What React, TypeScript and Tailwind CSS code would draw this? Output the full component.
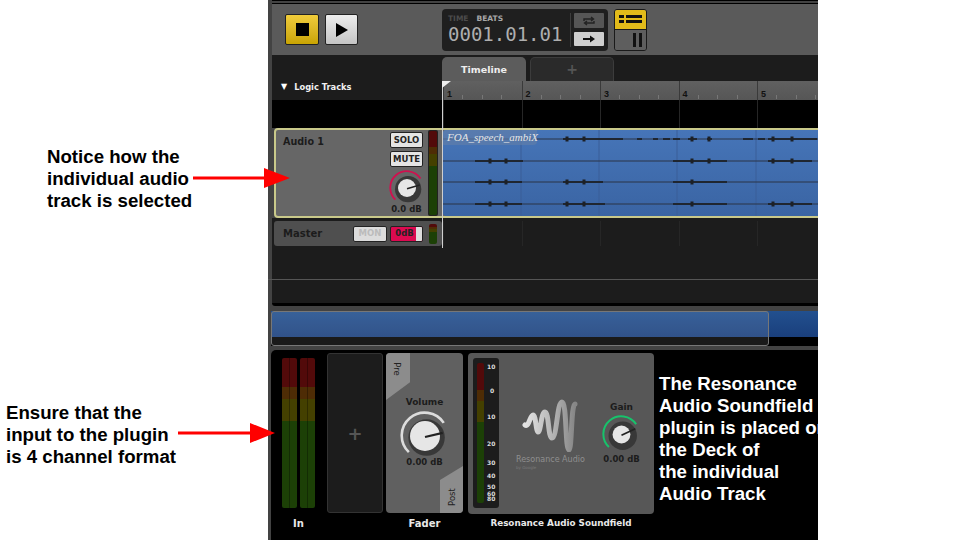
const ui = "font-['DejaVu_Sans',sans-serif]";

// x ranges per waveform row, read off the clip
const rowY = [139, 161, 182, 204];
const thick: [number, number, number][] = [
  [0, 563, 588], [0, 588, 613], [0, 613, 623], [0, 637, 642], [0, 653, 658], [0, 663, 670], [0, 673, 680],
  [0, 688, 697], [0, 707, 712], [0, 743, 753], [0, 758, 765], [0, 768, 817],
  [1, 475, 523], [1, 673, 727], [1, 768, 812],
  [2, 475, 522], [2, 563, 603], [2, 673, 727],
  [3, 475, 522], [3, 563, 605], [3, 673, 727], [3, 768, 812],
];
const blips: [number, number][] = [
  [0, 567], [0, 584], [0, 692], [0, 709], [0, 773], [0, 792],
  [1, 490], [1, 506], [1, 692], [1, 709], [1, 773], [1, 792],
  [2, 490], [2, 506], [2, 567], [2, 584], [2, 692],
  [3, 490], [3, 506], [3, 567], [3, 584], [3, 692], [3, 773], [3, 792],
];

function Waveform() {
  return (
    <svg className="absolute top-0 left-0" width="381" height="86" viewBox="443 130 381 86">
      {[521, 599, 677, 756].map((x) => (
        <line key={x} x1={x} x2={x} y1="130" y2="216" stroke="#3a5f98" strokeWidth="1" />
      ))}
      {rowY.map((y) => (
        <line key={y} x1="443" x2="824" y1={y} y2={y} stroke="#2a3547" strokeWidth="1" />
      ))}
      {thick.map(([r, a, b], i) => (
        <line key={i} x1={a} x2={b} y1={rowY[r]} y2={rowY[r]} stroke="#1f2630" strokeWidth="1.8" />
      ))}
      {blips.map(([r, x], i) => (
        <rect key={i} x={x - 1.5} y={rowY[r] - 2.5} width="3" height="5" fill="#1c2026" />
      ))}
    </svg>
  );
}

function Knob({ size, arc, tip, r }: { size: number; arc: string; tip: number; r: number }) {
  return (
    <svg width={size} height={size} viewBox="0 0 48 48">
      <path d="M8.5 39.5 A22 22 0 1 1 42 11.4" fill="none" stroke={arc} strokeWidth="2.5" />
      <circle cx="25.5" cy="25.5" r="17.5" fill="#383838" />
      <circle cx="24" cy="24" r={r} fill="#e6e6e6" />
      <path d={`M24 25 L41 ${tip}`} stroke="#222" strokeWidth="2" />
    </svg>
  );
}

function Meter({ w, h, split }: { w: string; h: string; split?: boolean }) {
  return (
    <div className={`relative flex flex-col overflow-hidden rounded-[2px] ${w} ${h}`}>
      <div className="h-[19%] bg-[#520a0a]" />
      <div className="h-[8%] bg-[#4e2c05]" />
      <div className="h-[15%] bg-[#444000]" />
      <div className="flex-1 bg-[#1c4006]" />
      {split && <i className="absolute top-0 left-[7px] h-full w-px bg-black/30" />}
    </div>
  );
}

function Ruler() {
  return (
    <div className="flex h-[19px] bg-gradient-to-b from-[#606060] to-[#565656]">
      {[1, 2, 3, 4, 5].map((n) => (
        <div key={n} className="grid h-full w-[78.5px] shrink-0 grid-cols-4 border-l border-[#3a3a3a]">
          <div className="flex items-end pb-[1px] pl-[3px]">
            <span className="font-['Liberation_Sans',sans-serif] text-[9px] leading-[10px] font-bold text-[#111]">{n}</span>
            <i className="ml-auto h-[4px] w-px bg-[#777]" />
          </div>
          <div className="flex items-end pb-[1px]"><i className="ml-auto h-[4px] w-px bg-[#777]" /></div>
          <div className="flex items-end pb-[1px]"><i className="ml-auto h-[4px] w-px bg-[#777]" /></div>
          <div />
        </div>
      ))}
    </div>
  );
}

function GridLines() {
  return (
    <div className="flex h-full">
      {[1, 2, 3, 4, 5].map((n) => (
        <div key={n} className="h-full w-[78.5px] shrink-0 border-l border-[#262626]" />
      ))}
    </div>
  );
}

export default function App() {
  return (
    <div className="relative flex h-[540px] w-[960px] overflow-hidden bg-white font-['Liberation_Sans',sans-serif]">
      <div className="flex h-full w-[268px] shrink-0 flex-col text-[18.67px] leading-[22px] font-bold text-black">
        <div className="mt-[146px] pl-[47px] whitespace-nowrap">Notice how the<br />individual audio<br />track is selected</div>
        <div className="mt-[190px] pl-[6px] whitespace-nowrap">Ensure that the<br />input to the plugin<br />is 4 channel format</div>
      </div>

      <div className={`relative flex h-full w-[550px] shrink-0 flex-col overflow-hidden bg-[#434343] pl-[4px] ${ui}`}>
        <div className="h-[3px] border-t border-black" />
        <div className="h-px bg-black" />

        {/* transport */}
        <div className="flex h-[51px] shrink-0 items-center bg-[#5a5a5a] pl-[13px]">
          <div className="flex h-[31px] w-[34px] items-center justify-center rounded-[2px] border border-[#222] bg-gradient-to-b from-[#f0cc3a] to-[#c9a400]">
            <div className="h-[13px] w-[13px] bg-black" />
          </div>
          <div className="ml-[6px] flex h-[31px] w-[33px] items-center justify-center rounded-[2px] border border-[#222] bg-gradient-to-b from-[#ededed] to-[#c4c4c4]">
            <svg width="14" height="14" viewBox="0 0 14 14"><path d="M1 0 L13 7 L1 14 Z" fill="#000" /></svg>
          </div>
          <div className="ml-[84px] flex h-[42px] w-[166px] items-center rounded-[4px] bg-[#1f1f1f] pl-[4px]">
            <div className="w-[124px] pl-[2px]">
              <div className="flex gap-[8px] text-[7.5px] leading-[9px] font-bold">
                <span className="text-[#4c4c4c]">TIME</span>
                <span className="text-[#a8a8a8]">BEATS</span>
              </div>
              <div className="font-['DejaVu_Sans_Mono',monospace] text-[19px] leading-[22px] whitespace-nowrap text-[#aeaeae]">0001.01.01</div>
            </div>
            <div className="flex h-[34px] items-center border-l border-[#3d3d3d] pl-[3px]">
              <div className="flex flex-col gap-[4px]">
                <div className="flex h-[15px] w-[30px] items-center justify-center rounded-[1px] bg-[#565656]">
                  <svg width="14" height="10" viewBox="0 0 14 10" fill="none" stroke="#222" strokeWidth="1.4">
                    <path d="M2 5 V3 H11 M9 1 L11.5 3 L9 5" />
                    <path d="M12 5 V7 H3 M5 5 L2.5 7 L5 9" />
                  </svg>
                </div>
                <div className="flex h-[14px] w-[30px] items-center justify-center rounded-[1px] bg-[#cfcfcf]">
                  <svg width="12" height="8" viewBox="0 0 12 8"><path d="M0 3 H7 V0.5 L12 4 L7 7.5 V5 H0 Z" fill="#111" /></svg>
                </div>
              </div>
            </div>
          </div>
          <div className="ml-[6px] flex h-[42px] w-[33px] flex-col overflow-hidden rounded-[3px] border border-[#1a1a1a]">
            <div className="flex h-[20px] flex-col items-center justify-center gap-[2px] border-b border-[#1a1a1a] bg-[#e2bb1a]">
              <div className="flex gap-[2px]"><i className="h-[3px] w-[5px] bg-[#111]" /><i className="h-[3px] w-[16px] bg-[#111]" /></div>
              <div className="flex gap-[2px]"><i className="h-[3px] w-[5px] bg-[#111]" /><i className="h-[3px] w-[16px] bg-[#111]" /></div>
            </div>
            <div className="flex flex-1 justify-end gap-[3px] bg-[#5e5e5e] pt-[3px] pr-[4px] pb-[3px]">
              <i className="h-full w-[3px] bg-[#111]" /><i className="h-full w-[3px] bg-[#111]" />
            </div>
          </div>
        </div>

        {/* timeline header */}
        <div className="flex h-[45px] shrink-0 bg-[#1c1c1c]">
          <div className="flex w-[171px] shrink-0 items-end pb-[7px] pl-[9px]">
            <span className="mr-[7px] mb-[2px] text-[8px] leading-[8px] text-white">▼</span>
            <span className="text-[8.3px] leading-[11px] font-bold text-[#f0f0f0]">Logic Tracks</span>
          </div>
          <div className="flex min-w-0 flex-1 flex-col">
            <div className="-ml-[1px] flex h-[26px] items-end gap-[4px]">
              <div className="flex h-[24px] w-[84px] items-center justify-center rounded-t-[5px] bg-[#5c5c5c] pt-[2px] text-[9.5px] font-bold text-[#eee]">Timeline</div>
              <div className="flex h-[24px] w-[84px] items-center justify-center rounded-t-[5px] border border-b-0 border-[#3c3c3c] bg-[#2a2a2a] text-[14px] font-bold text-[#555]">+</div>
            </div>
            <Ruler />
          </div>
        </div>

        {/* tracks */}
        <div className="flex h-[28px] shrink-0 bg-black pl-[171px]"><GridLines /></div>
        <div className="-mr-[6px] ml-[2px] flex h-[90px] shrink-0 overflow-hidden rounded-[4px] border-2 border-[#c9c98a] bg-[#666]">
          <div className="flex w-[167px] shrink-0 pt-[2px] pl-[7px]">
            <span className="mt-[3px] w-[107px] text-[9.6px] leading-[14px] font-bold text-[#1c1c1c]">Audio 1</span>
            <div className="flex w-[33px] flex-col items-center gap-[3px]">
              <div className="flex h-[16px] w-[33px] items-center justify-center rounded-[2px] border border-[#222] bg-[#e4e4e4] text-[8.5px] font-bold text-[#222]">SOLO</div>
              <div className="flex h-[16px] w-[33px] items-center justify-center rounded-[2px] border border-[#222] bg-[#e4e4e4] text-[8.5px] font-bold text-[#222]">MUTE</div>
              <Knob size={36} arc="#d0104f" tip={20} r={12} />
              <span className="mt-[-5px] text-[8.5px] leading-[10px] font-bold whitespace-nowrap text-[#1c1c1c]">0.0 dB</span>
            </div>
            <div className="mt-[-2px] ml-[5px] rounded-[2px] bg-[#222] p-px"><Meter w="w-[8px]" h="h-[84px]" /></div>
          </div>
          <div className="relative flex-1 overflow-hidden rounded-l-[3px] bg-gradient-to-b from-[#4675b8] to-[#3a64a3]">
            <Waveform />
            <div className="absolute top-0 left-0 h-[15px] w-[94px] rounded-br-[4px] bg-[#5f7ea9]/70 pl-[4px] font-['Liberation_Serif',serif] text-[11px] leading-[14px] text-[#e6e6e6] italic">FOA_speech_ambiX</div>
          </div>
        </div>
        <div className="h-[3px] shrink-0 bg-[#1c1c1c]" />
        <div className="flex h-[25px] shrink-0 bg-[#1c1c1c] pl-[2px]">
          <div className="flex w-[168px] shrink-0 items-center rounded-[3px] bg-[#4f4f4f] pl-[9px]">
            <span className="w-[70px] text-[10px] font-bold text-[#1c1c1c]">Master</span>
            <div className="flex h-[16px] w-[34px] items-center justify-center rounded-[2px] border border-[#222] bg-[#dcdcdc] text-[8.5px] font-bold text-[#bbb]">MON</div>
            <div className="relative ml-[3px] flex h-[16px] w-[33px] items-center justify-center overflow-hidden rounded-[2px] border border-[#222] bg-[#dc0a50] pr-[4px] text-[8.5px] font-bold text-[#222]">
              0dB
              <i className="absolute top-0 right-0 h-full w-[6px] bg-[#ddd]" />
            </div>
            <div className="ml-[6px] h-[20px]"><Meter w="w-[8px]" h="h-[20px]" /></div>
          </div>
          <div className="ml-[1px] flex-1"><GridLines /></div>
        </div>
        <div className="flex h-[57px] shrink-0 flex-col bg-[#1c1c1c]">
          <div className="-ml-[4px] h-[34px] border-b border-[#555]" />
        </div>
        <div className="h-[3px] shrink-0 rounded-bl-[3px] bg-black" />

        {/* overview */}
        <div className="h-[5px] shrink-0" />
        <div className="relative -ml-[1px] flex h-[35px] shrink-0 flex-col">
          <div className="h-[26px] bg-gradient-to-b from-[#22508f] to-[#1a3f7c]" />
          <div className="flex-1 bg-black" />
          <div className="absolute top-0 left-0 h-full w-[498px] rounded-[3px] border border-[#777] bg-white/10" />
        </div>
        <div className="h-[4px] shrink-0" />

        {/* deck */}
        <div className="-ml-[1px] flex min-h-0 flex-1 rounded-tl-[5px] bg-black">
          <div className="w-[56px] shrink-0 pl-[11px]">
            <div className="flex w-[33px] flex-col items-center">
              <div className="mt-[8px] flex h-[150px] gap-[3px]">
                <Meter w="w-[15px]" h="h-[150px]" split />
                <Meter w="w-[15px]" h="h-[150px]" split />
              </div>
              <span className="mt-[10px] text-[10px] leading-[12px] font-bold text-[#e8e8e8]">In</span>
            </div>
          </div>
          <div className="mt-[3px] flex h-[160px] w-[56px] shrink-0 items-center justify-center rounded-[3px] border border-[#333] bg-[#1c1c1c] text-[18px] font-bold text-[#555]">+</div>
          <div className="ml-[3px] flex w-[77px] shrink-0 flex-col items-center">
            <div className="relative mt-[3px] flex h-[160px] w-[77px] flex-col items-center overflow-hidden rounded-[4px] bg-[#606060]">
              <div className="absolute top-0 left-0 h-[47px] w-[24px] bg-[#8c8c8c] [clip-path:polygon(0_0,100%_0,100%_62%,0_100%)]">
                <span className="absolute top-[11px] left-[4px] rotate-90 text-[8.5px] leading-[10px] text-[#222]">Pre</span>
              </div>
              <div className="absolute right-0 bottom-0 h-[47px] w-[23px] bg-[#8c8c8c] [clip-path:polygon(0_30%,100%_0,100%_100%,0_100%)]">
                <span className="absolute right-[2px] bottom-[11px] -rotate-90 text-[8.5px] leading-[10px] text-[#222]">Post</span>
              </div>
              <span className="mt-[44px] text-[9px] leading-[11px] font-bold text-[#1c1c1c]">Volume</span>
              <div className="mt-[3px] flex"><Knob size={50} arc="#dcdcdc" tip={21} r={14.4} /></div>
              <span className="mt-[-4px] text-[8.5px] leading-[10px] font-bold text-[#1c1c1c]">0.00 dB</span>
            </div>
            <span className="mt-[5px] text-[10px] leading-[12px] font-bold text-[#e8e8e8]">Fader</span>
          </div>
          <div className="ml-[5px] flex w-[186px] shrink-0 flex-col items-center">
            <div className="mt-[3px] flex h-[161px] w-[186px] rounded-[4px] bg-[#575757] p-[5px]">
              <div className="flex h-[150px] w-[26px] shrink-0 rounded-[3px] bg-[#1c1c1c] py-[5px] pl-[4px]">
                <Meter w="w-[7px]" h="h-[140px]" />
                <div className="relative ml-[3px] flex-1 text-[6px] leading-[7px] font-bold text-[#ddd]">
                  <span className="absolute top-[0px]">10</span>
                  <span className="absolute top-[24px] left-[3px]">0</span>
                  <span className="absolute top-[50px]">10</span>
                  <span className="absolute top-[77px]">20</span>
                  <span className="absolute top-[96px]">30</span>
                  <span className="absolute top-[109px]">40</span>
                  <span className="absolute top-[120px]">50</span>
                  <span className="absolute top-[127px]">60</span>
                  <span className="absolute top-[132px]">80</span>
                </div>
              </div>
              <div className="ml-[17px] flex w-[86px] shrink-0 flex-col pt-[40px]">
                <svg width="60" height="54" viewBox="0 0 60 54" className="ml-[4px]">
                  <defs>
                    <linearGradient id="rw" x1="0" x2="1" y1="0" y2="0">
                      <stop offset="0" stopColor="#e4e4e4" />
                      <stop offset="0.6" stopColor="#b0b0b0" />
                      <stop offset="1" stopColor="#868686" />
                    </linearGradient>
                  </defs>
                  <path d="M5 27 C9 30 10 17 13 17 C16 17 16 34 18 34 C21 34 21 14 25 14 C29 14 28 40 32 40 C37 40 37 4 42 4 C47 4 45 52 49 52 C52 52 51 6 55 6" fill="none" stroke="url(#rw)" strokeWidth="5" strokeLinecap="round" />
                </svg>
                <span className="mt-[3px] text-[8px] leading-[10px] whitespace-nowrap text-[#8f8f8f]">Resonance Audio</span>
                <span className="text-[4px] leading-[5px] text-[#7a7a7a]">by Google</span>
              </div>
              <div className="flex w-[39px] flex-col items-center pt-[44px]">
                <span className="text-[9px] leading-[11px] font-bold text-[#1c1c1c]">Gain</span>
                <div className="mt-[2px] flex"><Knob size={39} arc="#17c26b" tip={17} r={11} /></div>
                <span className="text-[8.5px] leading-[10px] font-bold whitespace-nowrap text-[#1c1c1c]">0.00 dB</span>
              </div>
            </div>
            <span className="mt-[3px] text-[8.8px] leading-[12px] font-bold whitespace-nowrap text-[#e8e8e8]">Resonance Audio Soundfield</span>
          </div>
          <div className="ml-[5px] pt-[23px] font-['Liberation_Sans',sans-serif] text-[18.67px] leading-[22px] font-bold whitespace-nowrap text-white">
            The Resonance<br />Audio Soundfield<br />plugin is placed on<br />the Deck of<br />the individual<br />Audio Track
          </div>
        </div>

        {/* playhead */}
        <div className="absolute top-[81px] left-[174px] h-[167px] w-px bg-[#cfcfcf]" />
        <div className="absolute top-[81px] left-[174px] h-[7px] w-[9px] bg-[#eee] [clip-path:polygon(0_0,100%_0,0_100%)]" />
      </div>

      <svg className="absolute top-[165px] left-[190px]" width="102" height="26" viewBox="0 0 102 26"><path d="M3 11.5 H74 V3 L100 13 L74 23 V14.5 H3 Z" fill="#f00" /></svg>
      <svg className="absolute top-[420px] left-[175px]" width="102" height="26" viewBox="0 0 102 26"><path d="M3 11.5 H75 V3 L100 13 L75 23 V14.5 H3 Z" fill="#f00" /></svg>
    </div>
  );
}
